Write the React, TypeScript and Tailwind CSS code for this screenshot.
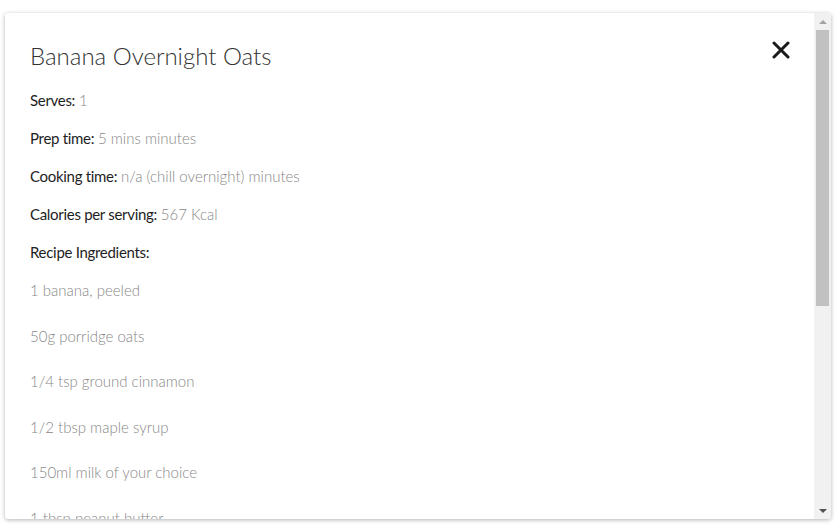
const details = [
  { label: "Serves:", value: "1" },
  { label: "Prep time:", value: "5 mins minutes" },
  { label: "Cooking time:", value: "n/a (chill overnight) minutes" },
  { label: "Calories per serving:", value: "567 Kcal" },
];

const ingredients = [
  "1 banana, peeled",
  "50g porridge oats",
  "1/4 tsp ground cinnamon",
  "1/2 tbsp maple syrup",
  "150ml milk of your choice",
  "1 tbsp peanut butter",
  "1 tbsp chia seeds",
];

export default function App() {
  return (
    <div className="w-[840px] h-[528px] bg-white pt-[13px] pl-[5px] font-['Lato',sans-serif]">
      <div className="flex w-[826px] h-[506px] bg-white rounded-[3px] shadow-[0_1px_4px_rgba(0,0,0,0.3)] overflow-hidden">
        <div className="relative flex-1 overflow-hidden pl-[25px] pt-[28px]">
          <button className="absolute right-[24px] top-[28px] text-[#1a1a1a]" aria-label="Close">
            <svg width="18" height="18" viewBox="0 0 18 18">
              <path d="M2 2 L16 16 M16 2 L2 16" stroke="currentColor" strokeWidth="3" strokeLinecap="round" />
            </svg>
          </button>
          <h2 className="text-[24px] font-light text-[#333] leading-[30px]">Banana Overnight Oats</h2>
          <div className="mt-[19px] flex flex-col gap-[18px] text-[15px] leading-[20px]">
            {details.map((d) => (
              <p key={d.label} className="text-[#1e1e1e]">
                <span className="font-normal tracking-[-0.3px]">{d.label}</span>{" "}
                <span className="font-light text-[#888]">{d.value}</span>
              </p>
            ))}
            <p className="text-[#1e1e1e] tracking-[-0.3px]">Recipe Ingredients:</p>
          </div>
          <ul className="mt-[18px] flex flex-col gap-[25.5px] text-[15px] leading-[20px] font-light text-[#888]">
            {ingredients.map((i) => (
              <li key={i}>{i}</li>
            ))}
          </ul>
        </div>
        <div className="w-[17px] h-full bg-[#f1f1f1] flex flex-col items-center">
          <div className="h-[17px] flex items-center justify-center">
            <div className="w-0 h-0 border-l-[4px] border-r-[4px] border-b-[4px] border-l-transparent border-r-transparent border-b-[#a3a3a3]" />
          </div>
          <div className="w-[13px] h-[276px] bg-[#c1c1c1]" />
          <div className="flex-1" />
          <div className="h-[17px] flex items-center justify-center">
            <div className="w-0 h-0 border-l-[4px] border-r-[4px] border-t-[4px] border-l-transparent border-r-transparent border-t-[#505050]" />
          </div>
        </div>
      </div>
    </div>
  );
}
